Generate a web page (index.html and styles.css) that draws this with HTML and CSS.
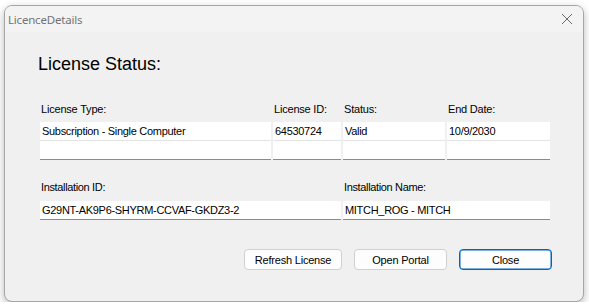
FILE: index.html
```html
<!DOCTYPE html>
<html lang="en">
<head>
    <meta charset="UTF-8">
    <meta name="viewport" content="width=device-width, initial-scale=1.0">
    <title>LicenceDetails</title>
    <link rel="stylesheet" href="styles.css">
</head>
<body>
    <div class="window">
        <div class="titlebar">
            <span class="title">LicenceDetails</span>
            <svg class="close-x" width="12" height="12" viewBox="0 0 12 12">
                <path d="M1 1 L11 11 M11 1 L1 11" stroke="#6a6a6a" stroke-width="1" fill="none"/>
            </svg>
        </div>
        <div class="content">
            <h1>License Status:</h1>

            <div class="fields top-fields">
                <div class="field">
                    <label>License Type:</label>
                    <div class="box">
                        <div class="cell">Subscription - Single Computer</div>
                        <div class="cell"></div>
                    </div>
                </div>
                <div class="field">
                    <label>License ID:</label>
                    <div class="box">
                        <div class="cell">64530724</div>
                        <div class="cell"></div>
                    </div>
                </div>
                <div class="field">
                    <label>Status:</label>
                    <div class="box">
                        <div class="cell">Valid</div>
                        <div class="cell"></div>
                    </div>
                </div>
                <div class="field">
                    <label>End Date:</label>
                    <div class="box">
                        <div class="cell">10/9/2030</div>
                        <div class="cell"></div>
                    </div>
                </div>
            </div>

            <div class="fields install-fields">
                <div class="field">
                    <label>Installation ID:</label>
                    <div class="textbox">G29NT-AK9P6-SHYRM-CCVAF-GKDZ3-2</div>
                </div>
                <div class="field">
                    <label>Installation Name:</label>
                    <div class="textbox">MITCH_ROG - MITCH</div>
                </div>
            </div>

            <div class="buttons">
                <button class="btn refresh">Refresh License</button>
                <button class="btn portal">Open Portal</button>
                <button class="btn close default">Close</button>
            </div>
        </div>
    </div>
</body>
</html>
```

FILE: styles.css
```css
body {
    margin: 0;
    background-color: #ffffff;
    font-family: "Liberation Sans", Arial, sans-serif;
    font-size: 11px;
    color: #000;
}
.window {
    margin: 5px 0 0 4px;
    width: 580px;
    height: 297px;
    box-sizing: border-box;
    border: 1px solid #a6a6a6;
    border-radius: 8px;
    background-color: #f0f0f0;
    box-shadow: 0 3px 8px rgba(0, 0, 0, 0.28);
    overflow: hidden;
}
.titlebar {
    height: 26px;
    background-color: #f3f3f3;
    display: flex;
    align-items: center;
    justify-content: space-between;
    padding: 0 10px 0 3px;
}
.title {
    font-family: "Noto Sans", "Open Sans", sans-serif;
    font-size: 11.5px;
    color: #737373;
    letter-spacing: -0.2px;
}
.close-x {
    margin-top: -1px;
}
.content {
    padding: 22px 33px 0 35px;
}
h1 {
    margin: 0 0 0 -2px;
    font-size: 18px;
    font-weight: normal;
    line-height: 20px;
}
.fields {
    display: grid;
    column-gap: 2px;
}
.top-fields {
    margin-top: 29px;
    grid-template-columns: 231px 68px 102px 103px;
}
.install-fields {
    margin-top: 21px;
    grid-template-columns: 301px 207px;
    letter-spacing: -0.3px;
}
label {
    display: block;
    line-height: 13px;
    padding-left: 1px;
    letter-spacing: -0.2px;
}
.top-fields label {
    margin-bottom: 6px;
}
.install-fields label {
    margin-bottom: 7px;
    letter-spacing: -0.35px;
}
.box {
    background: #fff;
    border-bottom: 1px solid #8a8a8a;
}
.cell {
    height: 18px;
    line-height: 18px;
    padding-left: 2px;
    border-bottom: 1px solid #e4e4e4;
    white-space: nowrap;
    letter-spacing: -0.3px;
}
.cell:last-child {
    border-bottom: none;
}
.textbox {
    background: #fff;
    height: 18px;
    line-height: 18px;
    padding-left: 2px;
    border-bottom: 1px solid #8a8a8a;
    white-space: nowrap;
}
.buttons {
    display: flex;
    justify-content: flex-end;
    gap: 12px;
    margin: 29px -2px 0 0;
}
.btn {
    height: 21px;
    padding: 0;
    font-family: "Liberation Sans", Arial, sans-serif;
    font-size: 11px;
    letter-spacing: -0.2px;
    color: #000;
    background-color: #fdfdfd;
    border: 1px solid #d0d0d0;
    border-radius: 4px;
}
.refresh {
    width: 98px;
}
.portal {
    width: 93px;
}
.close {
    width: 93px;
}
.default {
    border-color: #0067c0;
    box-shadow: inset 0 0 0 0.5px #0067c0;
}
```
